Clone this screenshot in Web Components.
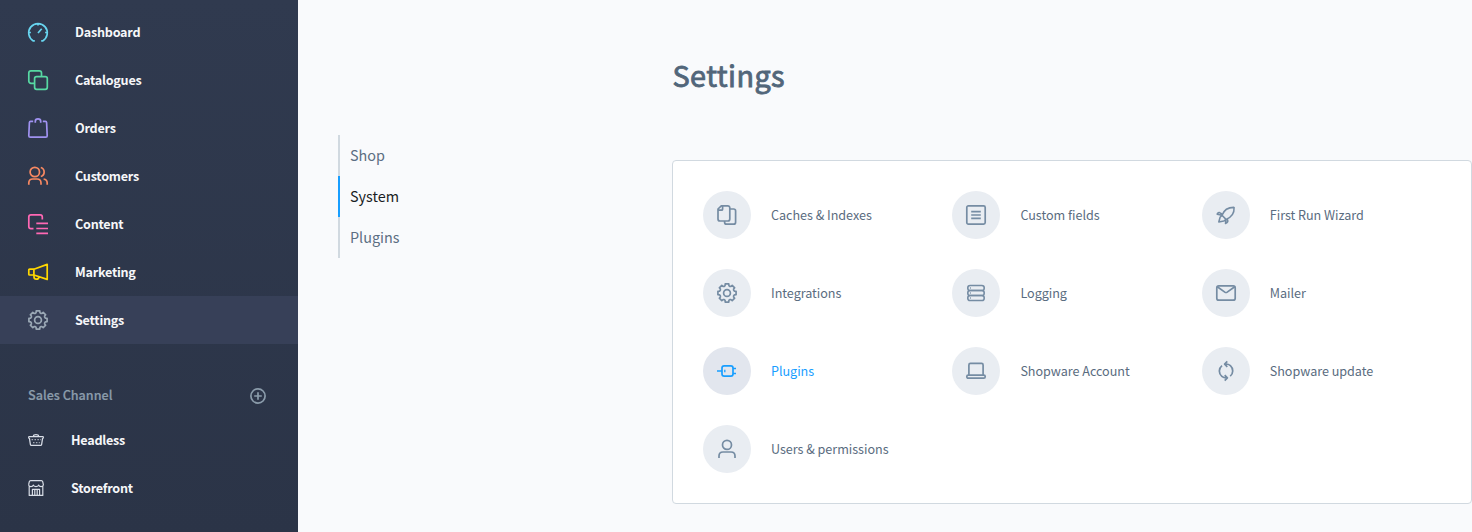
<!DOCTYPE html>
<html lang="en">
<head>
<meta charset="utf-8">
<title>Settings</title>
<style>
html,body{margin:0;height:100%}
body{font-family:"Source Sans Pro","Noto Sans CJK SC",sans-serif;background:#f9fafc;overflow:hidden}
</style>
</head>
<body>
<app-shell>
  <side-bar slot="nav">
    <nav-item icon="dashboard" color="#68d5f0">Dashboard</nav-item>
    <nav-item icon="catalogue" color="#57d9a3">Catalogues</nav-item>
    <nav-item icon="orders" color="#a092f0">Orders</nav-item>
    <nav-item icon="customers" color="#f88962">Customers</nav-item>
    <nav-item icon="content" color="#ff68b4">Content</nav-item>
    <nav-item icon="marketing" color="#ffd700">Marketing</nav-item>
    <nav-item icon="gear" color="#9aa8b5" active>Settings</nav-item>
    <channel-head>Sales Channel</channel-head>
    <nav-item icon="basket" color="#d8dde6" small>Headless</nav-item>
    <nav-item icon="store" color="#d8dde6" small>Storefront</nav-item>
  </side-bar>
  <side-tabs>
    <side-tab>Shop</side-tab>
    <side-tab active>System</side-tab>
    <side-tab>Plugins</side-tab>
  </side-tabs>
  <settings-page heading="Settings">
    <settings-tile icon="copy">Caches &amp; Indexes</settings-tile>
    <settings-tile icon="fields">Custom fields</settings-tile>
    <settings-tile icon="rocket">First Run Wizard</settings-tile>
    <settings-tile icon="gear">Integrations</settings-tile>
    <settings-tile icon="server">Logging</settings-tile>
    <settings-tile icon="mail">Mailer</settings-tile>
    <settings-tile icon="plug" active>Plugins</settings-tile>
    <settings-tile icon="laptop">Shopware Account</settings-tile>
    <settings-tile icon="update">Shopware update</settings-tile>
    <settings-tile icon="user">Users &amp; permissions</settings-tile>
  </settings-page>
</app-shell>
<script>
function gearPath(){
  const pts=[], n=8, step=2*Math.PI/n;
  const at=(r,a)=>[(10+r*Math.sin(a)).toFixed(2),(10-r*Math.cos(a)).toFixed(2)].join(' ');
  for(let i=0;i<n;i++){
    const a=i*step;
    pts.push(at(9.25,a-.19),at(9.25,a+.19),at(7.7,a+.25),at(7.2,a+step/2),at(7.7,a+step-.25));
  }
  return 'M'+pts.join('L')+'Z';
}
const ICONS={
  dashboard:'<path d="M6.8 18.9H5.3A9.3 9.3 0 1 1 14.7 18.9H13.2M.8 10.5H2.9M17.1 10.5H19.2M10 1.4V3.6M10 11L13.7 6.8"/>',
  catalogue:'<path d="M6.6 13.3H3a2.2 2.2 0 0 1-2.2-2.2V3A2.2 2.2 0 0 1 3 .8H11.3A2.2 2.2 0 0 1 13.5 3V6.6"/><rect x="6.6" y="6.6" width="12.7" height="12.7" rx="2"/>',
  orders:'<path d="M5.2 3.3H2.6Q1.5 3.3 1.4 4.5L.8 17.7Q.8 19.2 2.3 19.2H17.8Q19.2 19.2 19.2 17.7L18.6 4.5Q18.5 3.3 17.4 3.3H14.8M7.3 4.7V3.2Q7.3.8 10 .8T12.7 3.2V4.7"/>',
  customers:'<circle cx="6.8" cy="6" r="4.7"/><path d="M.8 18.8V17Q.8 13 4.8 13H9Q13 13 13 17V18.8M12.8 1.5A4.7 4.7 0 0 1 12.8 10.5M15.6 13Q19.2 13.6 19.2 17V18.8"/>',
  content:'<path d="M5.5 14.7H3A2.2 2.2 0 0 1 .8 12.5V3A2.2 2.2 0 0 1 3 .8H12.2A2.2 2.2 0 0 1 14.3 3V5.4M8.3 9.3H20M8.3 14.5H20M8.3 19.4H20"/>',
  marketing:'<path d="M5.9 7.2H1.6Q.8 7.2.8 8V12.2Q.8 13 1.6 13H5.9ZM5.9 7.2L19.2 2.4V17.4L5.9 13M6 13.2V14.8Q6 17.2 8.3 17.2T11 15"/>',
  gear:`<path d="${gearPath()}"/><circle cx="10" cy="10" r="3.4"/>`,
  basket:'<g stroke-width="1.25"><path d="M.7 6.6V5Q.7 4.5 1.2 4.5H14.8Q15.3 4.5 15.3 5V6.6M1.4 6.2L2.4 12.6Q2.6 13.4 3.4 13.4H12.6Q13.4 13.4 13.6 12.6L14.6 6.2M5.5 4.5V3.8Q5.5 2.5 8 2.5T10.5 3.8V4.5"/><path opacity=".7" stroke-dasharray="1.5 1.4" d="M3.6 7.5H13M5 10.5H11.8"/></g>',
  store:'<g stroke-width="1.2"><path d="M1.2 6V15.4H14.8V6M.6 4.8L1.3 1.7Q1.6.6 2.6.6H13.4Q14.4.6 14.7 1.7L15.4 4.8Q15 6.6 13.1 6.6T10.6 5Q10.4 6.6 8 6.6T5.4 5Q4.8 6.6 2.9 6.6T.6 4.8M4.4 15.2V9.4H11.6V15.2M6.8 9.4V15.2M9.2 9.4V15.2"/></g>',
  plus:'<circle cx="8" cy="8" r="7.1"/><path d="M8 4.2V11.8M4.2 8H11.8"/>',
  copy:'<path d="M4.3.8H10.8A2 2 0 0 1 12.8 2.8V14A2 2 0 0 1 10.8 16H3A2 2 0 0 1 1 14V4ZM5.6 1V4.2Q5.6 5.2 4.6 5.2H1.2M12.8 4H16.6A2 2 0 0 1 18.6 6V17.2A2 2 0 0 1 16.6 19.2H9.6A2 2 0 0 1 7.6 17.2V16"/>',
  fields:'<rect x=".8" y=".8" width="18.4" height="18.4" rx="1.6"/><path d="M5.2 6.6H14.8M5.2 10H14.8M5.2 13.4H14.8"/>',
  rocket:'<path stroke-width="1.55" d="M6 10.3C7.8 5.5 12.2 2.3 18.1 2.4C18.4 8.2 14.8 12.6 10 14.4ZM6.4 9.2L3.5 7.6Q2.5 7.3 1.7 8.2L1.2 9.2L6 10.3L10 14.4L9.5 18.5L10.8 17.7Q12.6 16.8 11.2 13.9M6 10.3L4.1 12.3L2.8 17L7.8 16.1L10 14.4"/>',
  server:'<g stroke-width="1.6"><rect x="1.8" y="2.5" width="16.4" height="5" rx="2.3"/><rect x="1.8" y="7.5" width="16.4" height="5" rx="2.3"/><rect x="1.8" y="12.5" width="16.4" height="5" rx="2.3"/></g><path d="M4.4 4.3V5.7M4.4 9.3V10.7M4.4 14.3V15.7" stroke-width="1"/>',
  mail:'<rect x=".8" y="2.9" width="18.4" height="14.3" rx="2"/><path d="M1.3 3.7L8.8 9.1Q10 9.9 11.2 9.1L18.7 3.7"/>',
  plug:'<rect x="5" y="4.8" width="11" height="10.4" rx="2.2"/><path d="M0 10H5M16 7.5H19M16 12.5H19"/><path stroke-width="1.3" d="M7.8 8.8V11.2"/>',
  laptop:'<path d="M2.9 14V3.9Q2.9 2.4 4.4 2.4H15.6Q17.1 2.4 17.1 3.9V14"/><rect x=".8" y="14.2" width="18.4" height="3" rx="1.4"/>',
  update:'<path d="M6 4.6A7 7 0 0 0 6 15.6M8.8 3.1Q12 2.6 14.4 4.6A7 7 0 0 1 14.2 15.2M5.8 15.4Q8 17.2 11.2 16.9M11.3.4L8.6 3.1L11.3 5.8M8.7 14.2L11.4 16.9L8.7 19.6"/>',
  user:'<circle cx="10" cy="5.9" r="4.5"/><path d="M2 19V17Q2 13 6 13H14Q18 13 18 17V19"/>'
};
function define(name,render){
  customElements.define(name,class extends HTMLElement{
    constructor(){super();this.attachShadow({mode:'open'})}
    connectedCallback(){this.shadowRoot.innerHTML=render(this)}
  });
}
define('ui-icon',e=>{
  const s=+(e.getAttribute('size')||20);
  return `<style>:host{display:block;width:${s}px;height:${s}px;flex:none}svg{display:block;overflow:visible}</style>
  <svg width="${s}" height="${s}" viewBox="0 0 ${s} ${s}" fill="none" stroke="currentColor" stroke-width="1.7" stroke-linejoin="round">${ICONS[e.getAttribute('name')]}</svg>`;
});
define('app-shell',()=>`<style>:host{display:grid;grid-template-columns:298px 374px 800px;height:532px}</style><slot name="nav"></slot><slot></slot>`);
define('side-bar',()=>`<style>:host{display:block;box-sizing:border-box;padding-top:8px;background:linear-gradient(180deg,#303a4f,#2b3447)}</style><slot></slot>`);
define('nav-item',e=>{
  const small=e.hasAttribute('small');
  return `<style>:host{display:flex;align-items:center;height:48px;box-sizing:border-box;padding-left:28px;gap:27px;background:${e.hasAttribute('active')?'#374058':'none'}}
  ui-icon{color:${e.getAttribute('color')}}
  .t{color:#f6f7f9;font-size:12.6px;line-height:20px;font-weight:600;letter-spacing:-.24px;white-space:nowrap}</style>
  <ui-icon name="${e.getAttribute('icon')}" size="${small?16:20}"></ui-icon><span class="t"><slot></slot></span>`;
});
define('channel-head',()=>`<style>:host{display:flex;align-items:center;justify-content:space-between;margin-top:32px;height:40px;padding:0 32px 0 28px;color:#8b9cab;font-size:12.6px;line-height:20px;font-weight:500}span{padding-bottom:2px;-webkit-text-stroke:.2px #8b9cab}</style><span><slot></slot></span><ui-icon name="plus" size="16"></ui-icon>`);
define('side-tabs',()=>`<style>:host{display:flex;flex-direction:column;margin:135px 0 0 40px}</style><slot></slot>`);
define('side-tab',e=>{
  const a=e.hasAttribute('active');
  return `<style>:host{display:flex;align-items:center;height:41px;padding-left:10px;border-left:2px solid ${a?'#189eff':'#d1d9e0'};color:${a?'#1b1e24':'#5c6e82'};font-size:14.4px;line-height:22px}span{padding-bottom:2px}</style><span><slot></slot></span>`;
});
define('settings-page',e=>`<style>
  h1{margin:55px 0 65px;padding-left:.5px;font-size:28.8px;line-height:40px;font-weight:400;letter-spacing:.42px;-webkit-text-stroke:.85px #52667a;color:#52667a}
  .card{box-sizing:border-box;width:800px;height:344px;padding:30px;border:1px solid #d1d9e0;border-radius:4px;background:#fff;display:grid;grid-template-columns:repeat(3,249.4px);grid-auto-rows:48px;row-gap:30px}
  </style><h1>${e.getAttribute('heading')}</h1><div class="card"><slot></slot></div>`);
define('settings-tile',e=>{
  const a=e.hasAttribute('active');
  return `<style>:host{display:flex;align-items:center;gap:20px;color:${a?'#189eff':'#5a6c80'};font-size:12.6px;line-height:20px;letter-spacing:-.03px;white-space:nowrap}
  .c{width:48px;height:48px;border-radius:50%;background:${a?'#e2e6ee':'#e9edf2'};color:${a?'#189eff':'#758ca3'};display:flex;align-items:center;justify-content:center}</style>
  <div class="c"><ui-icon name="${e.getAttribute('icon')}"></ui-icon></div><span><slot></slot></span>`;
});
</script>
</body>
</html>
